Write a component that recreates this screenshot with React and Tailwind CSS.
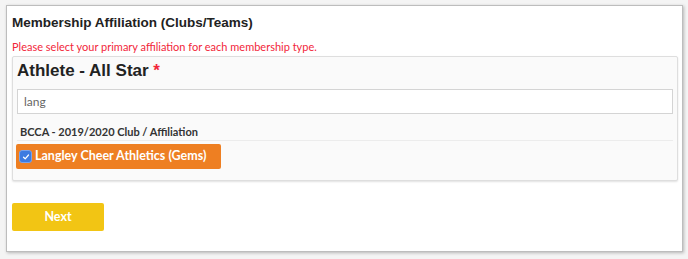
import React, { useState } from "react";

const App = () => {
  const [search, setSearch] = useState("lang");
  const [checked, setChecked] = useState(true);

  return (
    <div className="w-[688px] h-[259px] bg-[#f4f4f4] pt-[5px] pl-[6px]">
      <div className="w-[677px] h-[247px] bg-white border border-[#bdbdbd] shadow-[1px_1px_3px_rgba(0,0,0,0.25)] pl-[5px] pr-[4px] pt-[9px]">
        <h2 className="font-['Liberation_Sans',sans-serif] font-bold text-[13.5px] leading-[16px] text-[#222] mb-[9px]">
          Membership Affiliation (Clubs/Teams)
        </h2>
        <p className="font-['Lato',sans-serif] text-[11px] leading-[14px] text-[#f2263a] mb-[2px]">
          Please select your primary affiliation for each membership type.
        </p>

        <div className="bg-[#fafafa] border border-[#dedede] rounded-[2px] shadow-[0_1px_2px_rgba(0,0,0,0.12)] px-[4px] pb-[11px]">
          <div className="font-['Liberation_Sans',sans-serif] font-bold text-[17px] leading-[20px] text-[#222] pt-[4px] mb-[8px]">
            Athlete - All Star <span className="text-[#f2263a]">*</span>
          </div>
          <input
            type="text"
            value={search}
            onChange={(e) => setSearch(e.target.value)}
            className="block w-full h-[25px] bg-white border border-[#d4d4d4] px-[6px] font-['Lato',sans-serif] text-[12px] text-[#666] outline-none"
          />
          <div className="font-['Lato',sans-serif] font-bold text-[11px] leading-[14px] text-[#333] pl-[3px] pt-[11px] pb-[1px] border-b border-[#ececec]">
            BCCA - 2019/2020 Club / Affiliation
          </div>
          {/* selected affiliation chip */}
          <label className="mt-[3px] ml-[-1px] flex items-center gap-[3px] w-[205px] h-[25px] bg-[#ee7f22] rounded-[2px] pl-[3px] cursor-pointer">
            <input
              type="checkbox"
              checked={checked}
              onChange={(e) => setChecked(e.target.checked)}
              className="sr-only"
            />
            <span className="w-[13px] h-[13px] rounded-[3px] bg-[#3d7be0] border border-[#7aa3ea] flex items-center justify-center">
              {checked && (
                <svg width="8" height="8" viewBox="0 0 8 8" fill="none">
                  <path d="M1.5 4.2 L3.2 5.8 L6.5 2" stroke="white" strokeWidth="1.2" strokeLinecap="round" strokeLinejoin="round" />
                </svg>
              )}
            </span>
            <span className="font-['Lato',sans-serif] font-bold text-[12.5px] text-white whitespace-nowrap">
              Langley Cheer Athletics (Gems)
            </span>
          </label>
        </div>

        <button className="mt-[22px] w-[92px] h-[28px] bg-[#f2c514] rounded-[2px] font-['Lato',sans-serif] font-bold text-[12.5px] text-white">
          Next
        </button>
      </div>
    </div>
  );
};

export default App;
